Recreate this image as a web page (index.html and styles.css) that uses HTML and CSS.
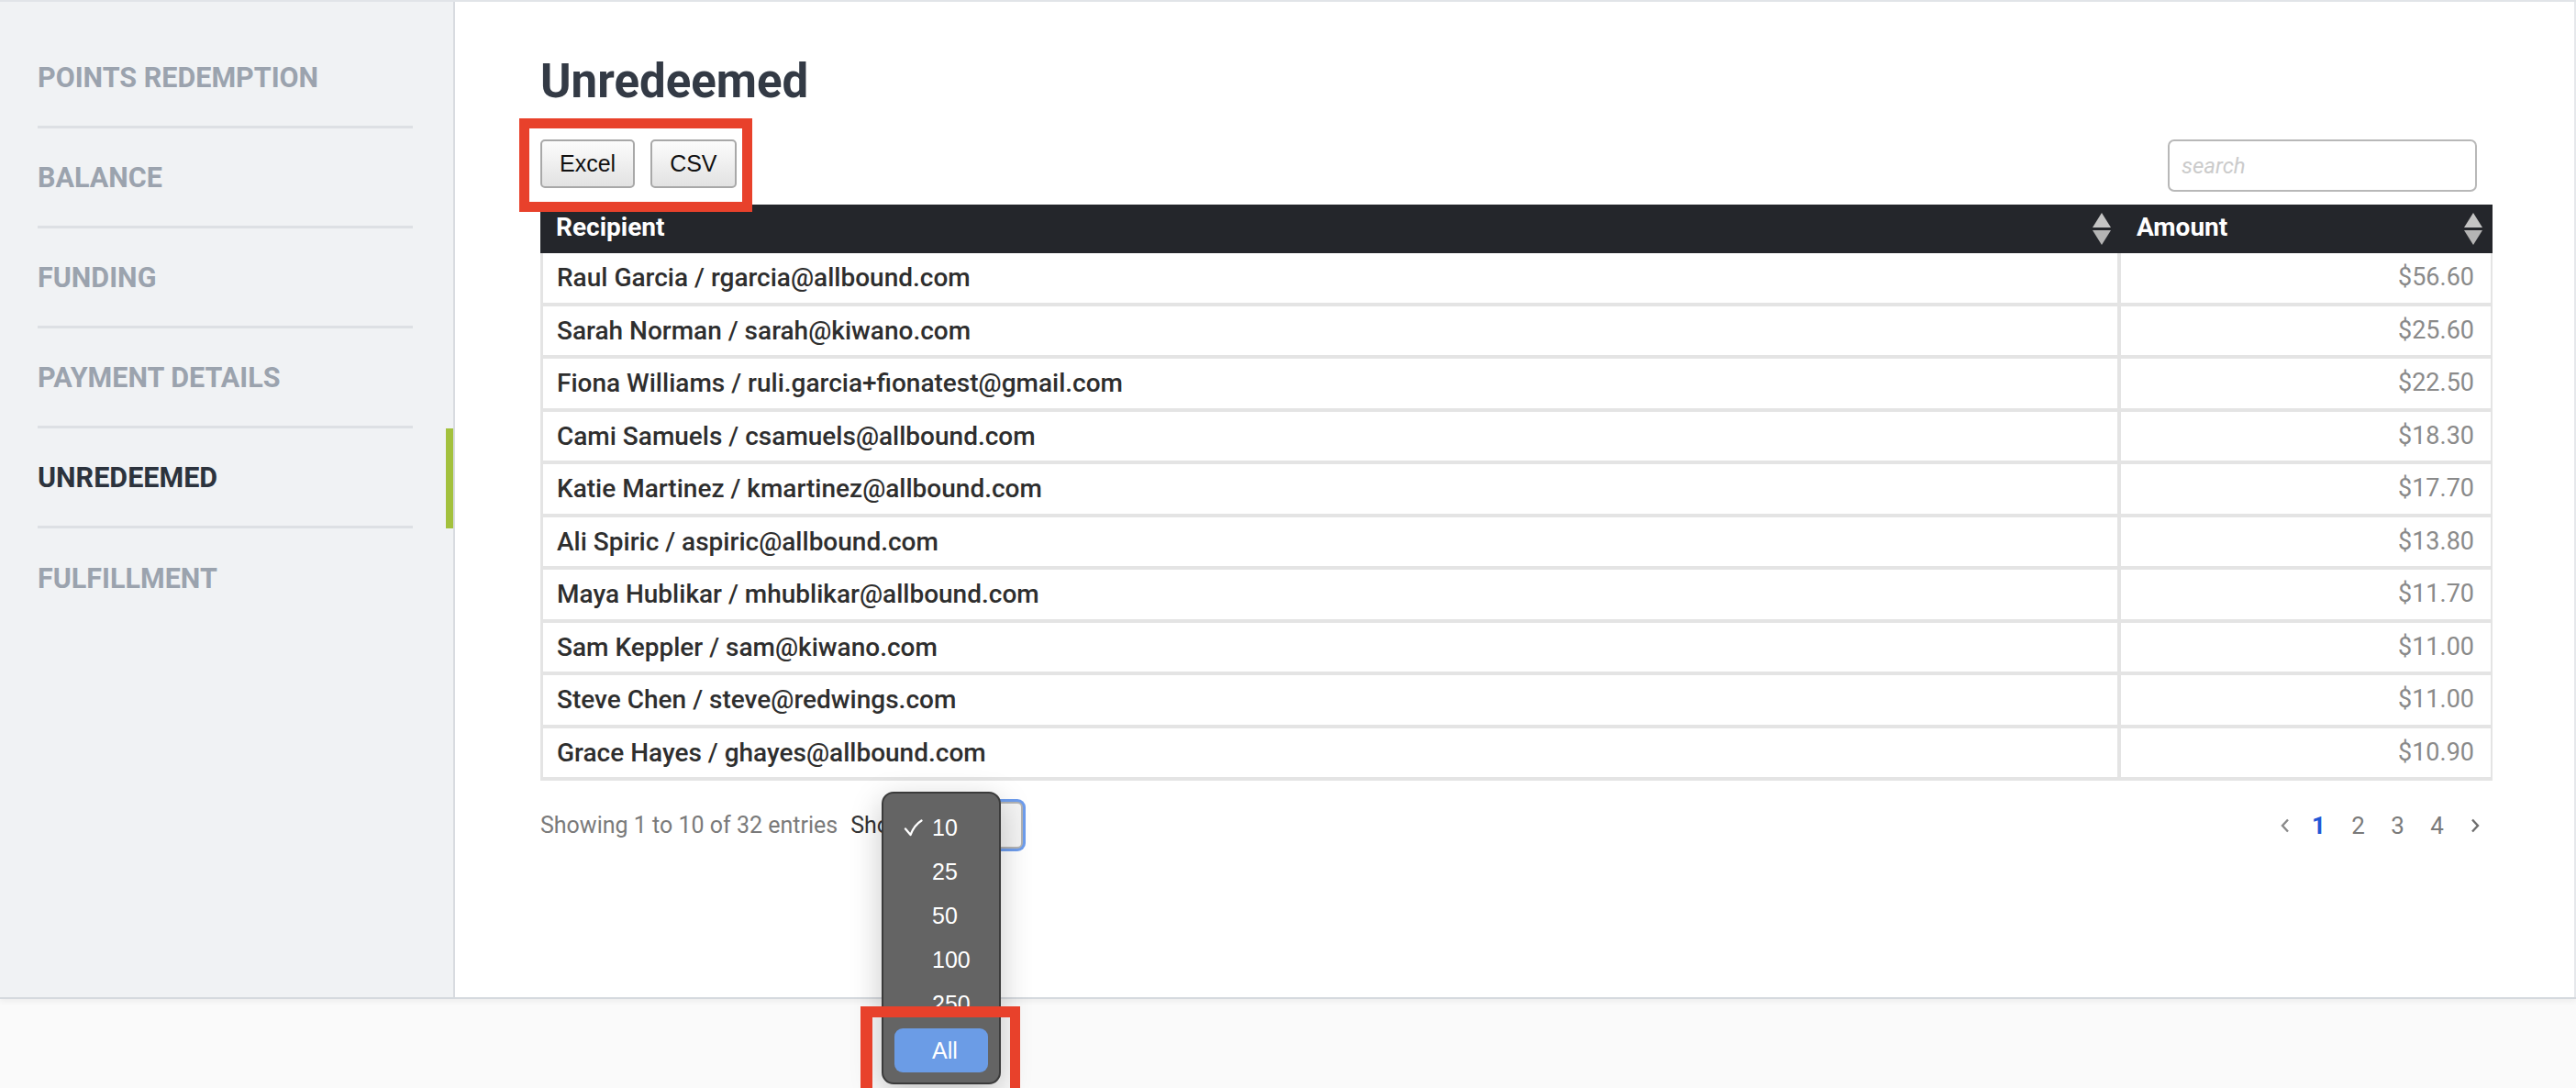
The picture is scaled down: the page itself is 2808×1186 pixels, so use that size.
FILE: index.html
```html
<!DOCTYPE html>
<html lang="en">
<head>
  <meta charset="UTF-8" />
  <meta name="viewport" content="width=device-width, initial-scale=1.0"/>
  <title>Unredeemed</title>
  <link rel="stylesheet" href="styles.css">
</head>
<body>
  <div class="layout">
    <aside class="sidebar">
      <ul class="side-nav">
        <li><a href="#points">Points Redemption</a></li>
        <li><a href="#balance">Balance</a></li>
        <li><a href="#funding">Funding</a></li>
        <li><a href="#payment">Payment Details</a></li>
        <li class="active"><a href="#unredeemed">Unredeemed</a></li>
        <li class="last"><a href="#fulfillment">Fulfillment</a></li>
      </ul>
    </aside>

    <main class="content">
      <h1>Unredeemed</h1>

      <div class="toolbar">
        <div class="export">
          <button class="export-btn">Excel</button>
          <button class="export-btn">CSV</button>
        </div>
        <input class="search" type="text" placeholder="search">
      </div>

      <table class="grid">
        <thead>
          <tr>
            <th class="col-recipient">
              <div class="th-inner">
                <span>Recipient</span>
                <svg class="sort" width="20" height="35" viewBox="0 0 20 35">
                  <polygon points="10,0 20,16 0,16" fill="#c4c4c4"/>
                  <polygon points="0,19 20,19 10,35" fill="#b4b4b4"/>
                </svg>
              </div>
            </th>
            <th class="col-amount">
              <div class="th-inner">
                <span>Amount</span>
                <svg class="sort" width="20" height="35" viewBox="0 0 20 35">
                  <polygon points="10,0 20,16 0,16" fill="#c4c4c4"/>
                  <polygon points="0,19 20,19 10,35" fill="#b4b4b4"/>
                </svg>
              </div>
            </th>
          </tr>
        </thead>
        <tbody>
          <tr><td>Raul Garcia / rgarcia@allbound.com</td><td class="amount">$56.60</td></tr>
          <tr><td>Sarah Norman / sarah@kiwano.com</td><td class="amount">$25.60</td></tr>
          <tr><td>Fiona Williams / ruli.garcia+fionatest@gmail.com</td><td class="amount">$22.50</td></tr>
          <tr><td>Cami Samuels / csamuels@allbound.com</td><td class="amount">$18.30</td></tr>
          <tr><td>Katie Martinez / kmartinez@allbound.com</td><td class="amount">$17.70</td></tr>
          <tr><td>Ali Spiric / aspiric@allbound.com</td><td class="amount">$13.80</td></tr>
          <tr><td>Maya Hublikar / mhublikar@allbound.com</td><td class="amount">$11.70</td></tr>
          <tr><td>Sam Keppler / sam@kiwano.com</td><td class="amount">$11.00</td></tr>
          <tr><td>Steve Chen / steve@redwings.com</td><td class="amount">$11.00</td></tr>
          <tr><td>Grace Hayes / ghayes@allbound.com</td><td class="amount">$10.90</td></tr>
        </tbody>
      </table>

      <div class="table-footer">
        <div class="footer-left">
          <span class="info">Showing 1 to 10 of 32 entries</span>
          <label class="length">Show
            <span class="length-select">10</span>
          </label>
        </div>
        <div class="pager">
          <a class="pg-prev" href="#prev">
            <svg width="10" height="16" viewBox="0 0 10 16"><polyline points="8,1.5 2,8 8,14.5" fill="none" stroke="#8a8a8a" stroke-width="2.4"/></svg>
          </a>
          <a class="pg current" href="#1">1</a>
          <a class="pg" href="#2">2</a>
          <a class="pg" href="#3">3</a>
          <a class="pg" href="#4">4</a>
          <a class="pg-next" href="#next">
            <svg width="10" height="16" viewBox="0 0 10 16"><polyline points="2,1.5 8,8 2,14.5" fill="none" stroke="#6e6e6e" stroke-width="2.4"/></svg>
          </a>
        </div>
      </div>
    </main>
  </div>
  <div class="bottom-bar"></div>

  <!-- native select popup, open -->
  <ul class="length-menu">
    <li>
      <span class="check">
        <svg width="21" height="19" viewBox="0 0 21 19"><path d="M2 10.5 L7.5 17 Q11.5 6.5 19.5 1.5" fill="none" stroke="#fff" stroke-width="2.3" stroke-linecap="round" stroke-linejoin="round"/></svg>
      </span>10
    </li>
    <li><span class="check"></span>25</li>
    <li><span class="check"></span>50</li>
    <li><span class="check"></span>100</li>
    <li><span class="check"></span>250</li>
    <li class="picked"><span class="check"></span>All</li>
  </ul>

  <!-- annotation boxes -->
  <div class="annot annot-export"></div>
  <div class="annot annot-all"></div>
</body>
</html>
```

FILE: styles.css
```css
* {
  box-sizing: border-box;
}

html, body {
  margin: 0;
  padding: 0;
}

body {
  font-family: Roboto, "Liberation Sans", sans-serif;
  width: 2808px;
  height: 1186px;
  overflow: hidden;
  position: relative;
  display: flex;
  flex-direction: column;
  background: #fafafa;
}

.layout {
  display: flex;
  height: 1089px;
  border-top: 2px solid #e1e4e8;
  border-bottom: 2px solid #d5d9de;
  box-shadow: 0 3px 6px rgba(0, 0, 0, 0.05);
  position: relative;
  z-index: 1;
}

.bottom-bar {
  flex: 1;
  background: #fafafa;
}

/* sidebar */
.sidebar {
  width: 496px;
  background: #f0f2f4;
  border-right: 2px solid #d8dbe0;
  padding-top: 29px;
}

.side-nav {
  list-style: none;
  margin: 0;
  padding: 0;
}

.side-nav li {
  padding: 0 44px 0 41px;
}

.side-nav li.active {
  padding-right: 36px;
  border-right: 8px solid #a3c13d;
}

.side-nav a {
  display: flex;
  align-items: center;
  height: 109px;
  border-bottom: 3px solid #dde0e4;
  font-size: 30.5px;
  font-weight: 700;
  color: #9ba3ae;
  text-decoration: none;
  text-transform: uppercase;
}

.side-nav li.active a {
  color: #2c333d;
}

.side-nav li.last a {
  border-bottom: none;
}

/* main */
.content {
  flex: 1;
  background: #fff;
  border-right: 2px solid #e6e8eb;
  padding: 57px 89px 0 93px;
}

h1 {
  margin: 0;
  font-size: 51px;
  font-weight: 700;
  color: #333a45;
}

.toolbar {
  display: flex;
  justify-content: space-between;
  align-items: flex-start;
  margin-top: 34px;
  padding-right: 17px;
}

.export {
  display: flex;
  gap: 17px;
}

.export-btn {
  height: 53px;
  padding: 0 19px;
  font-family: "Liberation Sans", Arial, sans-serif;
  font-size: 25px;
  color: #111;
  border: 2px solid #a8a8a8;
  border-radius: 5px;
  background: linear-gradient(#fcfcfc, #e2e2e2);
}

.search {
  width: 337px;
  height: 57px;
  border: 2px solid #b8b8b8;
  border-radius: 7px;
  padding: 0 13px;
  font-family: Roboto, sans-serif;
  font-size: 24px;
  outline: none;
}

.search::placeholder {
  color: #cbcbcb;
  font-style: italic;
}

/* table */
.grid {
  width: 100%;
  margin-top: 14px;
  border-collapse: separate;
  border-spacing: 0;
  table-layout: fixed;
}

.grid th {
  background: #24262b;
  color: #fff;
  font-size: 28px;
  font-weight: 700;
  text-align: left;
  height: 53px;
  padding: 0 11px 0 17px;
}

.grid th.col-amount {
  width: 405px;
  padding-left: 17px;
}

.th-inner {
  display: flex;
  justify-content: space-between;
  align-items: center;
}

.th-inner span {
  position: relative;
  top: -2px;
}

.grid td {
  font-size: 28px;
  font-weight: 500;
  color: #2e2e2e;
  line-height: 53.5px;
  padding: 0 15px;
  border-bottom: 4px solid #e4e4e4;
  border-right: 4px solid #e4e4e4;
  white-space: nowrap;
}

.grid td:first-child {
  border-left: 3px solid #e4e4e4;
}

.grid td.amount {
  text-align: right;
  font-weight: 400;
  font-size: 27px;
  color: #8a8a8a;
  padding-right: 18px;
  border-right-width: 2px;
}

/* footer under the table */
.table-footer {
  display: flex;
  justify-content: space-between;
  align-items: center;
  margin-top: 23px;
}

.footer-left {
  display: flex;
  align-items: center;
  font-size: 25px;
}

.info {
  color: #7a7a7a;
}

.length {
  display: flex;
  align-items: center;
  margin-left: 14px;
  color: #333;
}

.length-select {
  display: inline-flex;
  align-items: center;
  width: 116px;
  height: 51px;
  margin-left: 10px;
  padding-left: 14px;
  border: 2px solid #b3b3b3;
  border-radius: 6px;
  background: #f4f4f4;
  box-shadow: 0 0 0 3px #6e9ded;
}

.pager {
  display: flex;
  align-items: center;
  font-size: 26px;
}

.pager a {
  display: flex;
  justify-content: center;
  align-items: center;
  height: 40px;
  color: #7a7a7a;
  text-decoration: none;
}

.pg-prev {
  width: 30px;
}

.pg {
  width: 43px;
}

.pg.current {
  color: #2257d6;
  font-weight: 700;
}

.pg-next {
  width: 39px;
}

/* open select popup */
.length-menu {
  position: absolute;
  left: 961px;
  top: 863px;
  width: 130px;
  height: 319px;
  margin: 0;
  padding: 13px 12px;
  list-style: none;
  background: #646464;
  border: 2px solid #3b3b3b;
  border-radius: 13px;
  box-shadow: 0 10px 34px rgba(0, 0, 0, 0.22);
  z-index: 5;
  font-family: "Liberation Sans", Arial, sans-serif;
  font-size: 25px;
  color: #fff;
}

.length-menu li {
  display: flex;
  align-items: center;
  height: 48px;
  padding-left: 10px;
  border-radius: 9px;
}

.length-menu li.picked {
  margin-top: 3px;
  background: #6b9ce6;
}

.check {
  display: flex;
  align-items: center;
  width: 31px;
}

/* red highlight boxes */
.annot {
  position: absolute;
  border: 11px solid #e8412b;
  z-index: 10;
}

.annot-export {
  left: 566px;
  top: 129px;
  width: 254px;
  height: 102px;
}

.annot-all {
  left: 938px;
  top: 1097px;
  width: 174px;
  height: 89px;
  border-width: 12px 11px 0 13px;
}
```
